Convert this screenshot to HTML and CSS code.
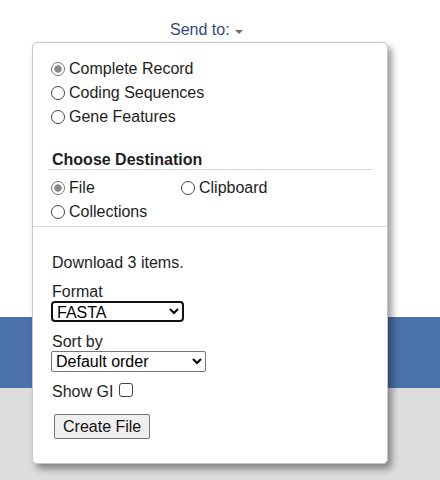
FILE: index.html
```html
<!DOCTYPE html>
<html>
<head>
<meta charset="utf-8">
<link rel="stylesheet" href="styles.css">
</head>
<body>
<div class="page">
  <div class="top">
    <div class="sendto">Send to:<span class="caret"></span></div>
  </div>
  <div class="band"></div>
  <div class="rest"></div>

  <div class="menu">
    <div class="sec1">
      <label class="row"><input type="radio" name="rec" checked><span>Complete Record</span></label>
      <label class="row"><input type="radio" name="rec"><span>Coding Sequences</span></label>
      <label class="row"><input type="radio" name="rec"><span>Gene Features</span></label>
      <div class="heading">Choose Destination</div>
      <div class="dest">
        <label class="row"><input type="radio" name="dst" checked><span>File</span></label>
        <label class="row"><input type="radio" name="dst"><span>Clipboard</span></label>
        <label class="row"><input type="radio" name="dst"><span>Collections</span></label>
      </div>
    </div>
    <div class="sec2">
      <div class="line">Download 3 items.</div>
      <div class="line gap">Format</div>
      <select class="sel sel-fmt"><option>FASTA</option></select>
      <div class="line gap">Sort by</div>
      <select class="sel sel-sort"><option>Default order</option></select>
      <label class="line gap showgi"><span>Show GI</span><input type="checkbox" class="chk"></label>
      <button class="btn">Create File</button>
    </div>
  </div>
</div>
</body>
</html>
```
FILE: styles.css
```css
html, body {
  margin: 0;
  padding: 0;
}
body {
  font-family: "Liberation Sans", Arial, sans-serif;
  font-size: 16px;
  color: #1e1e1e;
  width: 440px;
  height: 480px;
  overflow: hidden;
}
.page {
  position: relative;
  width: 440px;
  height: 480px;
}
.top {
  height: 317px;
  background: #fff;
}
.sendto {
  padding-left: 170px;
  padding-top: 21px;
  line-height: 18px;
  color: #34497f;
  display: flex;
  align-items: center;
}
.caret {
  display: inline-block;
  width: 0;
  height: 0;
  border-left: 4px solid transparent;
  border-right: 4px solid transparent;
  border-top: 4px solid #6b6b6b;
  margin-left: 5px;
  margin-top: 3px;
}
.band {
  height: 71px;
  background: #4a71a9;
}
.rest {
  height: 92px;
  background: #dddddd;
}
.menu {
  position: absolute;
  left: 32px;
  top: 42px;
  width: 356px;
  box-sizing: border-box;
  background: #fff;
  border: 1px solid #c8c8c8;
  border-radius: 5px;
  box-shadow: 4px 5px 7px rgba(0, 0, 0, 0.4);
}
.sec1 {
  padding: 14px 14px 2px 15px;
}
.row {
  display: flex;
  align-items: center;
  height: 24px;
  line-height: 24px;
  padding-left: 3px;
  gap: 4px;
}
.row input[type="radio"] {
  appearance: none;
  -webkit-appearance: none;
  margin: 0;
  width: 14px;
  height: 14px;
  box-sizing: border-box;
  border: 1px solid #444;
  border-radius: 50%;
  background: #fff;
  flex: none;
}
.row input[type="radio"]:checked {
  border: 1.5px solid #777;
  background: radial-gradient(circle, #888 0, #888 3.4px, #fff 4px);
}
.heading {
  margin-top: 21px;
  font-weight: bold;
  line-height: 19px;
  padding-left: 4px;
  border-bottom: 1px solid #dcdcdc;
}
.dest {
  margin-top: 6px;
  display: grid;
  grid-template-columns: 130px 1fr;
}
.sec2 {
  border-top: 1px solid #dcdcdc;
  padding: 27px 14px 24px 19px;
}
.line {
  line-height: 18px;
  height: 18px;
}
.gap {
  margin-top: 11px;
}
.sel {
  display: block;
  margin: 0 0 0 -1px;
  height: 21px;
  box-sizing: border-box;
  font-family: "Liberation Sans", Arial, sans-serif;
  font-size: 16px;
  color: #000;
  background: #fff;
  padding: 0;
}
.sel-fmt {
  width: 133px;
  border: 2px solid #111;
  border-radius: 4px;
}
.sel-sort {
  width: 155px;
  border: 1px solid #767676;
  border-radius: 2px;
}
.showgi {
  display: flex;
  align-items: center;
}
.chk {
  appearance: none;
  -webkit-appearance: none;
  width: 14px;
  height: 14px;
  box-sizing: border-box;
  border: 1px solid #444;
  border-radius: 3px;
  margin: -5px 0 0 6px;
  background: #fff;
}
.btn {
  display: block;
  margin: 13px 0 0 2px;
  height: 25px;
  box-sizing: border-box;
  padding: 0 8px;
  font-family: "Liberation Sans", Arial, sans-serif;
  font-size: 16px;
  color: #111;
  background: #efefef;
  border: 1px solid #767676;
  border-radius: 2px;
}
```
